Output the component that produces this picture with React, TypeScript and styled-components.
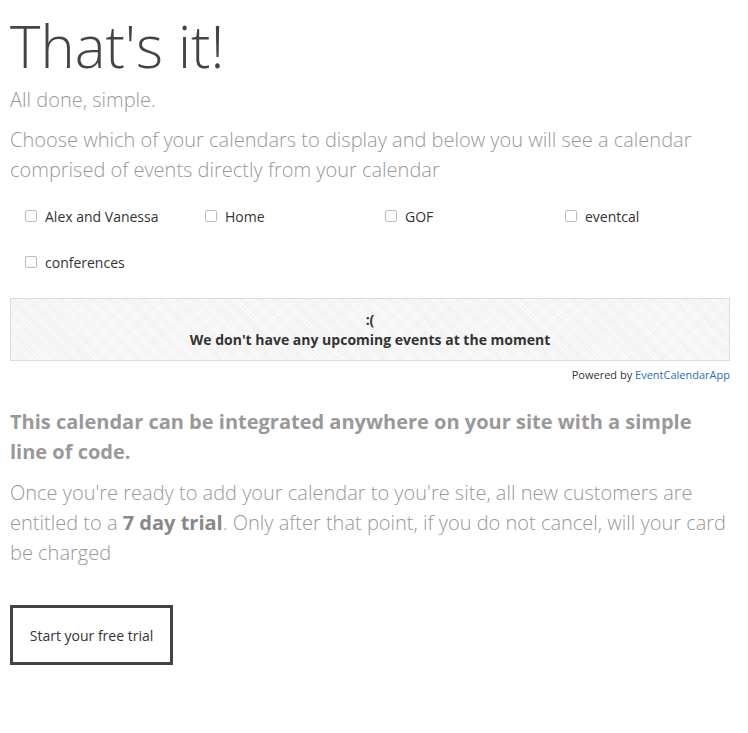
import React from "react";
import styled, { createGlobalStyle } from "styled-components";

const Global = createGlobalStyle`
  html, body { margin: 0; padding: 0; background: #fff; }
  body { font-family: "Open Sans", "Liberation Sans", sans-serif; color: #333; }
  * { box-sizing: border-box; }
`;

const Page = styled.main`
  width: 740px;
  padding: 13px 10px 40px 10px;
  display: flex;
  flex-direction: column;
`;

const Title = styled.h1`
  margin: 0;
  font-size: 58px;
  line-height: 65px;
  font-weight: 300;
  color: #444;
`;

const Lead = styled.p<{ $gap: number }>`
  margin: ${(p) => p.$gap}px 0 0 0;
  font-size: 20px;
  line-height: 30px;
  font-weight: 300;
  color: #999;
`;

const Strong = styled.strong`
  font-weight: 700;
  color: #888;
`;

const SubHeading = styled.h3`
  margin: 24px 0 0 0;
  font-size: 20px;
  line-height: 30px;
  font-weight: 700;
  color: #999;
`;

const CalendarGrid = styled.div`
  margin-top: 8px;
  display: grid;
  grid-template-columns: repeat(4, 180px);
`;

const CalendarOption = styled.label`
  display: flex;
  align-items: center;
  gap: 8px;
  height: 46px;
  padding-left: 15px;
  font-size: 14px;
  color: #333;
  cursor: pointer;
`;

const Box = styled.span`
  width: 12px;
  height: 12px;
  border: 1px solid #bbb;
  border-radius: 2px;
  background: #fff;
  flex: none;
`;

const EventsPanel = styled.section`
  margin-top: 13px;
  border: 1px solid #dcdcdc;
  padding: 11px 10px 10px;
  text-align: center;
  font-size: 14px;
  line-height: 20px;
  font-weight: 700;
  color: #333;
  background-color: #f4f4f4;
  background-image:
    repeating-linear-gradient(45deg, rgba(255,255,255,0.6) 0 1px, transparent 1px 2px),
    repeating-linear-gradient(-45deg, rgba(225,225,225,0.35) 0 1px, transparent 1px 3px);
`;

const Powered = styled.div`
  margin-top: 6px;
  text-align: right;
  font-size: 11px;
  line-height: 16px;
  color: #333;
`;

const Link = styled.a`
  color: #2a6ebb;
  text-decoration: none;
`;

const TrialButton = styled.button`
  margin-top: 37px;
  align-self: flex-start;
  width: 163px;
  height: 60px;
  border: 3px solid #444;
  background: #fff;
  font-family: "Open Sans", "Liberation Sans", sans-serif;
  font-size: 14px;
  color: #333;
  cursor: pointer;
`;

const calendars = ["Alex and Vanessa", "Home", "GOF", "eventcal", "conferences"];

export default function App() {
  return (
    <>
      <Global />
      <Page>
        <Title>That's it!</Title>
        <Lead $gap={7}>All done, simple.</Lead>
        <Lead $gap={10}>
          Choose which of your calendars to display and below you will see a calendar comprised of events directly
          from your calendar
        </Lead>
        <CalendarGrid>
          {calendars.map((c) => (
            <CalendarOption key={c}>
              <Box />
              {c}
            </CalendarOption>
          ))}
        </CalendarGrid>
        <EventsPanel>
          <div>:(</div>
          <div>We don't have any upcoming events at the moment</div>
        </EventsPanel>
        <Powered>
          Powered by <Link href="#">EventCalendarApp</Link>
        </Powered>
        <SubHeading>This calendar can be integrated anywhere on your site with a simple line of code.</SubHeading>
        <Lead $gap={11}>
          Once you're ready to add your calendar to you're site, all new customers are entitled to a{" "}
          <Strong>7 day trial</Strong>. Only after that point, if you do not cancel, will your card be charged
        </Lead>
        <TrialButton>Start your free trial</TrialButton>
      </Page>
    </>
  );
}
